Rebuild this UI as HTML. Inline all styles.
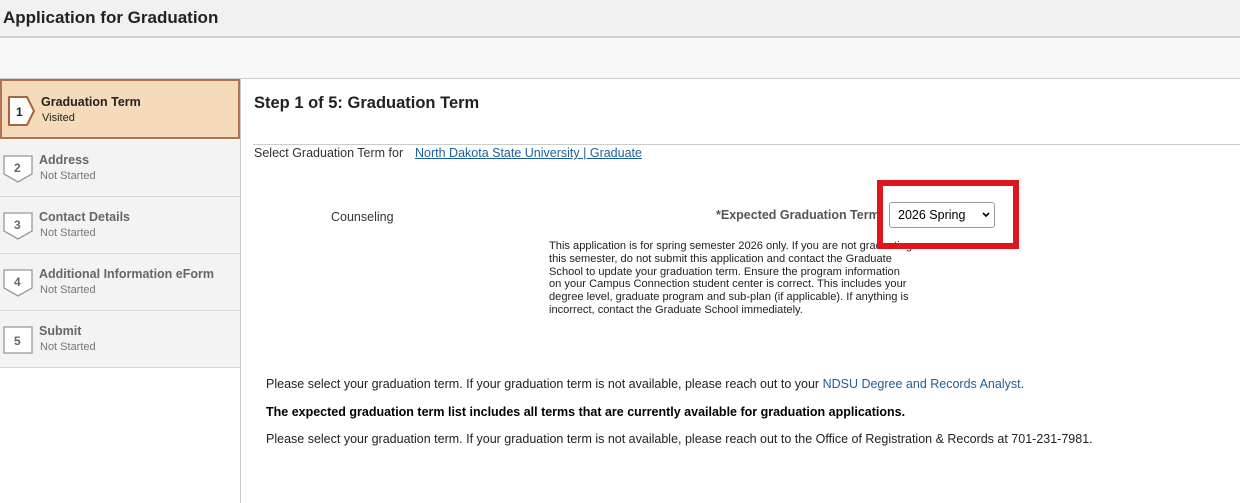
<!DOCTYPE html>
<html><head><style>
body{margin:0;width:1240px;height:503px;overflow:hidden;background:#fff;font-family:"Liberation Sans",Arial,sans-serif;color:#000;position:relative}
.hdr{position:absolute;left:0;top:0;width:1240px;height:36px;background:#f1f1f1;border-bottom:2px solid #d0d0d0}
.hdr span{position:absolute;left:3px;top:8px;font-size:17px;font-weight:bold;color:#222}
.band{position:absolute;left:0;top:38px;width:1240px;height:40px;background:#f8f8f8;border-bottom:1px solid #ccc}
.side{position:absolute;left:0;top:79px;width:240px;height:424px;background:#fff;border-right:1px solid #ccc}
.item{position:absolute;left:0;width:240px;height:56px;background:#f3f3f3;border-bottom:1px solid #d6d6d6}
.item .t{position:absolute;left:39px;top:13px;font-size:12.5px;font-weight:bold;color:#666}
.item .s{position:absolute;left:40px;top:30px;font-size:11px;color:#777}
.item svg{position:absolute;left:3px;top:14px}
.act{background:#f6dbbb;border:2px solid #b07453;width:236px;height:56px;top:0}
.act .t{color:#222;left:39px;top:14px}.act .s{color:#222;top:31px}
.a{position:absolute;font-size:12.5px;white-space:nowrap}
</style></head><body>
<div class="hdr"><span>Application for Graduation</span></div>
<div class="band"></div>
<div class="side">
<div class="item act"><svg width="32" height="32"><path d="M4 2 H22 L29 16 L22 30 H4 Z" fill="#fff" stroke="#a8643f" stroke-width="2" stroke-linejoin="round"/><text x="11" y="21" font-size="12" font-weight="bold" fill="#222" font-family="Liberation Sans">1</text></svg><div class="t">Graduation Term</div><div class="s">Visited</div></div>
<div class="item" style="top:61px"><svg width="32" height="32"><path d="M1 2 H29 V20 L15 28 L1 20 Z" fill="#fff" stroke="#999" stroke-width="1.3"/><text x="11" y="18" font-size="12" font-weight="bold" fill="#666" font-family="Liberation Sans">2</text></svg><div class="t">Address</div><div class="s">Not Started</div></div>
<div class="item" style="top:118px"><svg width="32" height="32"><path d="M1 2 H29 V20 L15 28 L1 20 Z" fill="#fff" stroke="#999" stroke-width="1.3"/><text x="11" y="18" font-size="12" font-weight="bold" fill="#666" font-family="Liberation Sans">3</text></svg><div class="t">Contact Details</div><div class="s">Not Started</div></div>
<div class="item" style="top:175px"><svg width="32" height="32"><path d="M1 2 H29 V20 L15 28 L1 20 Z" fill="#fff" stroke="#999" stroke-width="1.3"/><text x="11" y="18" font-size="12" font-weight="bold" fill="#666" font-family="Liberation Sans">4</text></svg><div class="t">Additional Information eForm</div><div class="s">Not Started</div></div>
<div class="item" style="top:232px"><svg width="32" height="32"><rect x="1" y="2" width="28" height="26" fill="#fff" stroke="#999" stroke-width="1.3"/><text x="11" y="20" font-size="12" font-weight="bold" fill="#666" font-family="Liberation Sans">5</text></svg><div class="t">Submit</div><div class="s">Not Started</div></div>
</div>
<div class="a" style="left:254px;top:94px;font-size:16.5px;font-weight:bold;color:#222">Step 1 of 5: Graduation Term</div>
<div style="position:absolute;left:253px;top:144px;width:987px;border-top:1px solid #ccc"></div>
<div class="a" style="left:254px;top:146px;color:#333">Select Graduation Term for</div>
<div class="a" style="left:415px;top:146px;color:#1d5f9a;text-decoration:underline">North Dakota State University | Graduate</div>
<div class="a" style="left:331px;top:210px;color:#333">Counseling</div>
<div class="a" style="left:716px;top:208px;color:#555;font-weight:bold">*Expected Graduation Term</div>
<div style="position:absolute;left:889px;top:202px;width:104px;height:24px;border:1px solid #999;border-radius:3px;background:#fff"><span class="a" style="left:8px;top:5px;font-size:12.5px">2026 Spring</span><svg style="position:absolute;left:92px;top:9px" width="8" height="6"><path d="M1 1 L4 4 L7 1" stroke="#000" stroke-width="1.6" fill="none"/></svg></div>
<div style="position:absolute;left:549px;top:240px;font-size:11.1px;line-height:12.8px;color:#222;white-space:nowrap">This application is for spring semester 2026 only. If you are not graduating<br>this semester, do not submit this application and contact the Graduate<br>School to update your graduation term. Ensure the program information<br>on your Campus Connection student center is correct. This includes your<br>degree level, graduate program and sub-plan (if applicable). If anything is<br>incorrect, contact the Graduate School immediately.</div>
<div style="position:absolute;left:877px;top:180px;width:130px;height:57px;border:6px solid #e0141c"></div>
<div class="a" style="left:266px;top:377px;color:#222">Please select your graduation term. If your graduation term is not available, please reach out to your <span style="color:#1d5f9a">NDSU Degree and Records Analyst</span>.</div>
<div class="a" style="left:266px;top:405px;font-weight:bold">The expected graduation term list includes all terms that are currently available for graduation applications.</div>
<div class="a" style="left:266px;top:432px;color:#222">Please select your graduation term. If your graduation term is not available, please reach out to the Office of Registration &amp; Records at 701-231-7981.</div>
</body></html>
